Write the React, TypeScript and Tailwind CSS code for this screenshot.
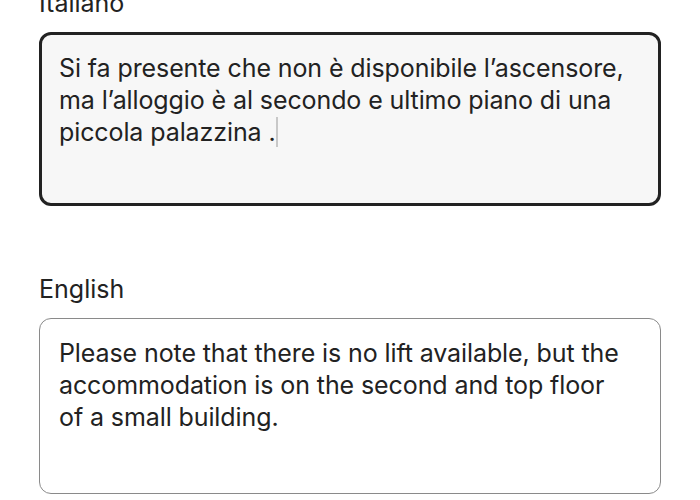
export default function App() {
  return (
    <div
      className="min-h-screen bg-white px-[39px] text-[#222222]"
      style={{ fontFamily: "Inter, 'Noto Sans', sans-serif" }}
    >
      <div className="-mt-[13px]">
        <label className="block text-[25px] leading-[32px] mb-[13px]">Italiano</label>
        <div className="h-[174px] rounded-[12px] border-[3px] border-[#222222] bg-[#f7f7f7] px-[17px] pt-[17px] text-[25px] leading-[32px] tracking-[-0.1px]">
          Si fa presente che non è disponibile l’ascensore,
          <br />
          ma l’alloggio è al secondo e ultimo piano di una
          <br />
          piccola palazzina .
          <span className="inline-block w-[2px] h-[30px] bg-[#c8c8c8] align-middle -mt-[4px]" />
        </div>

        <label className="block text-[25px] leading-[32px] mt-[67px] mb-[13px]">English</label>
        <div className="h-[176px] rounded-[12px] border border-[#8a8a8a] bg-white px-[19px] pt-[18px] text-[25px] leading-[32px] tracking-[-0.1px]">
          Please note that there is no lift available, but the
          <br />
          accommodation is on the second and top floor
          <br />
          of a small building.
        </div>
      </div>
    </div>
  );
}
